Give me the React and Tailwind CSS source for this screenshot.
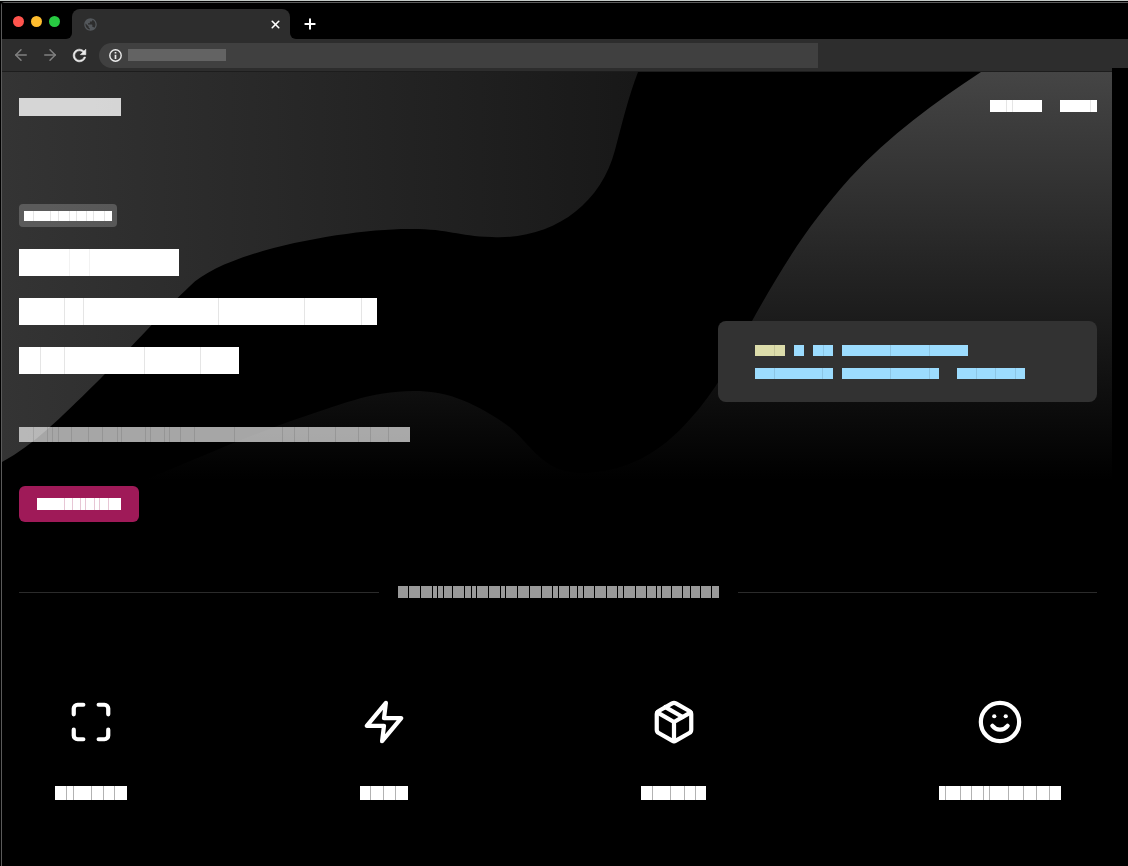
import { Maximize, Smile, ArrowLeft, ArrowRight, Plus, X } from "lucide-react";
import { MdPublic } from "react-icons/md";

// A masked run of text: a solid bar split into glyph-width segments.
// `seams` holds the seam offsets in pixels from the left edge.
function Bar({ className, seams = [], seamClass = "bg-black/10" }) {
  const gaps = seams.map((s, i) => s - (i ? seams[i - 1] + 1 : 0));
  return (
    <span aria-hidden="true" className={`flex shrink-0 ${className}`}>
      {gaps.map((w, i) => (
        <span key={i} className="flex shrink-0">
          <span style={{ width: w }} />
          <span className={`w-px ${seamClass}`} />
        </span>
      ))}
    </span>
  );
}

function FeatureIcon({ children }) {
  return (
    <svg width="46" height="46" viewBox="0 0 24 24" fill="none" stroke="currentColor" strokeWidth="2.200" strokeLinecap="round" strokeLinejoin="round" aria-hidden="true">
      {children}
    </svg>
  );
}

const features = [
  { icon: <Maximize size={46} strokeWidth={2.2} aria-hidden="true" />, width: "w-[72px]", seams: [11, 18, 36, 48, 59] },
  {
    icon: (
      <FeatureIcon>
        <polygon points="13 2 3 14 12 14 11 22 21 10 12 10 13 2" />
      </FeatureIcon>
    ),
    width: "w-12",
    seams: [10, 23, 35],
  },
  {
    icon: (
      <FeatureIcon>
        <path d="M16.500 9.400L7.500 4.210" />
        <path d="M21 16V8a2 2 0 0 0-1-1.730l-7-4a2 2 0 0 0-2 0l-7 4A2 2 0 0 0 3 8v8a2 2 0 0 0 1 1.730l7 4a2 2 0 0 0 2 0l7-4A2 2 0 0 0 21 16z" />
        <path d="M3.270 6.960L12 12.010l8.730-5.050M12 22.080V12" />
      </FeatureIcon>
    ),
    width: "w-[65px]",
    seams: [11, 29, 43, 54],
  },
  { icon: <Smile size={46} strokeWidth={2.2} aria-hidden="true" />, width: "w-[122px]", seams: [6, 21, 32, 44, 50, 69, 84, 97, 110] },
];

const captionSeams = [10, 22, 34, 39, 45, 54, 66, 73, 78, 90, 102, 107, 119, 131, 143, 154, 160, 171, 179, 185, 196, 208, 219, 225, 237, 248, 258, 263, 273, 284, 292, 302, 313];

function BrowserChrome() {
  return (
    <header>
      <div className="flex h-9 items-end bg-black">
        <div className="relative flex h-9 items-center gap-[7px] pl-[11px] pr-3">
          <span className="size-[11px] rounded-full bg-[#ff544d]" />
          <span className="size-[11px] rounded-full bg-[#ffbd2e]" />
          <span className="size-[11px] rounded-full bg-[#28cb42]" />
          <span className="absolute bottom-0 right-0 size-[6px] bg-[#2d2d2d]">
            <span className="block size-full rounded-br-[6px] bg-black" />
          </span>
        </div>
        <div className="flex h-[30px] w-[218px] items-center justify-between rounded-t-lg bg-[#2d2d2d] pl-[11px] pr-2">
          <MdPublic size={15} className="text-[#53575b]" aria-hidden="true" />
          <button aria-label="Close tab" className="text-white"><X size={13} strokeWidth={3} /></button>
        </div>
        <div className="relative flex h-[30px] items-center pl-3">
          <span className="absolute bottom-0 left-0 size-[6px] bg-[#2d2d2d]">
            <span className="block size-full rounded-bl-[6px] bg-black" />
          </span>
          <button aria-label="New tab" className="text-white"><Plus size={16} strokeWidth={3} /></button>
        </div>
      </div>
      <div className="relative flex h-[33px] items-center border-b border-[#1d1d1d] bg-[#2d2d2d] pl-[10px]">
        <button aria-label="Back" className="text-[#808080]"><ArrowLeft size={18} strokeWidth={2} /></button>
        <button aria-label="Forward" className="ml-[11px] text-[#808080]"><ArrowRight size={18} strokeWidth={2} /></button>
        <button aria-label="Reload" className="ml-[11px] text-[#ececec]">
          <svg width="19" height="19" viewBox="0 0 24 24" fill="currentColor" stroke="currentColor" strokeWidth="0.700" aria-hidden="true">
            <path d="M17.650 6.350A7.958 7.958 0 0 0 12 4c-4.420 0-7.990 3.580-7.990 8s3.570 8 7.990 8c3.730 0 6.840-2.550 7.730-6h-2.080A5.990 5.990 0 0 1 12 18c-3.310 0-6-2.690-6-6s2.690-6 6-6c1.660 0 3.140.69 4.220 1.780L13 11h7V4l-2.350 2.350z" />
          </svg>
        </button>
        <div className="ml-[10px] flex h-[25px] w-[64.4%] items-center gap-[6px] rounded-l-full rounded-r-sm bg-[#404040] pl-[10px]">
          <svg width="13" height="13" viewBox="0 0 13 13" fill="none" stroke="#ececec" aria-hidden="true">
            <circle cx="6.500" cy="6.500" r="5.700" strokeWidth="1.400" />
            <path d="M6.500 5.700V10M6.500 3V4.600" strokeWidth="1.700" />
          </svg>
          <Bar className="-mt-px h-3 w-[98px] bg-[#636363]" />
        </div>
        <span className="absolute -bottom-px right-0 h-[4px] w-4 bg-black" />
      </div>
    </header>
  );
}

function Backdrop() {
  return (
    <svg className="absolute inset-x-0 top-0 h-[410px] w-full" viewBox="2 72 1110 410" preserveAspectRatio="none" aria-hidden="true">
      <defs>
        <linearGradient id="left" x1="0" x2="1" y1="0" y2="0">
          <stop offset="0" stopColor="#343434" />
          <stop offset="1" stopColor="#181818" />
        </linearGradient>
        <linearGradient id="right" x1="0" x2="0" y1="0" y2="1">
          <stop offset="0" stopColor="#454545" />
          <stop offset="1" stopColor="#000000" />
        </linearGradient>
      </defs>
      <path fill="url(#left)" d="M2 72H638C628 98 622 124 615 150C600 207 550 240 492 237C455 236 450 228.500 408 229C350 229 225 250 190 286C165 309 120 360 95 384C60 418 35 444 2 462Z" />
      <path fill="url(#right)" d="M1112 72H981C935 102 890 135 850 178C806 227 780 271 752 321C732 360 715 392 691 418C660 454 625 472 583 473C540 474 530 440 504 423C470 400 445 391 414 391C370 391 340 405 288 422C230 443 190 462 144 480H1112Z" />
    </svg>
  );
}

export default function App() {
  return (
    <div className="min-h-screen border-t border-[#c5cbc8] bg-black pl-px pt-px font-['Liberation_Sans',sans-serif] text-white">
      <div className="min-h-[864px] rounded-tl-[4px] border-l border-t border-[#5a5a5a]">
        <BrowserChrome />
        <main className="relative mr-4">
          <Backdrop />
          <div className="relative pl-[17px] pr-[15px]">
            <nav className="flex items-start justify-between pt-[26px]">
              <a href="#home" aria-label="Home"><Bar className="h-[18px] w-[102px] bg-white/80" /></a>
              <div className="flex gap-[18px] pt-[2px]">
                <a href="#docs" aria-label="Documentation"><Bar className="h-3 w-[52px] bg-white" seams={[16, 22]} /></a>
                <a href="#source" aria-label="Source"><Bar className="h-3 w-[37px] bg-white" seams={[30]} /></a>
              </div>
            </nav>
            <section className="flex items-start justify-between pt-[88px]">
              <div className="flex flex-col items-start">
                <span className="flex h-[23px] items-center rounded-sm bg-white/20 px-[5px]">
                  <Bar className="h-[10px] w-[88px] bg-white" seams={[9, 26, 34, 45, 52, 62, 69, 80]} />
                </span>
                <h1 className="mt-[22px] flex flex-col gap-[22px]" aria-label="Headline">
                  <Bar className="h-[27px] w-40 bg-white" seams={[50, 70]} seamClass="bg-black/5" />
                  <Bar className="h-[27px] w-[358px] bg-white" seams={[45, 64, 199, 285, 342]} seamClass="bg-black/10" />
                  <Bar className="h-[27px] w-[220px] bg-white" seams={[21, 45, 125, 181]} seamClass="bg-black/10" />
                </h1>
                <p className="mt-[53px]">
                  <Bar className="h-[15px] w-[391px] bg-white/65" seams={[14, 28, 33, 39, 52, 69, 83, 98, 102, 126, 131, 145, 150, 161, 175, 215, 263, 275, 289, 316, 339, 351, 369]} />
                </p>
                <button aria-label="Get started" className="mt-11 flex h-9 items-center rounded-md bg-[#9f1a58] px-[18px]">
                  <Bar className="h-3 w-[84px] bg-white" seams={[27, 35, 43, 48, 57, 62, 71]} seamClass="bg-[#9f1a58]/25" />
                </button>
              </div>
              <div className="mt-[117px] flex h-[81px] w-[35.2%] flex-col gap-3 rounded-lg bg-[#323232] pl-[37px] pt-6">
                <div className="flex gap-[9px]">
                  <Bar className="h-[11px] w-[30px] bg-[#dcdcaa]" seams={[19]} />
                  <Bar className="h-[11px] w-[10px] bg-[#9cdcfe]" />
                  <Bar className="h-[11px] w-5 bg-[#9cdcfe]" seams={[10]} />
                  <Bar className="h-[11px] w-[126px] bg-[#9cdcfe]" seams={[48, 87]} />
                </div>
                <div className="flex gap-[9px]">
                  <Bar className="h-[11px] w-[78px] bg-[#9cdcfe]" seams={[19, 67]} />
                  <Bar className="mr-[9px] h-[11px] w-[97px] bg-[#9cdcfe]" seams={[48, 87]} />
                  <Bar className="h-[11px] w-[68px] bg-[#9cdcfe]" seams={[19, 38, 58]} />
                </div>
              </div>
            </section>
            <div className="mt-16 flex items-center gap-[19px]">
              <span className="h-px flex-1 bg-[#2b2b2b]" />
              <Bar className="h-3 w-[321px] bg-[#999999]" seams={captionSeams} seamClass="bg-black" />
              <span className="h-px flex-1 bg-[#2b2b2b]" />
            </div>
            <section className="mt-[101px] flex justify-between px-9">
              {features.map((f, i) => (
                <div key={i} className="flex flex-col items-center gap-[41px]">
                  {f.icon}
                  <Bar className={`h-[14px] bg-white ${f.width}`} seams={f.seams} seamClass="bg-black/30" />
                </div>
              ))}
            </section>
          </div>
        </main>
      </div>
    </div>
  );
}
